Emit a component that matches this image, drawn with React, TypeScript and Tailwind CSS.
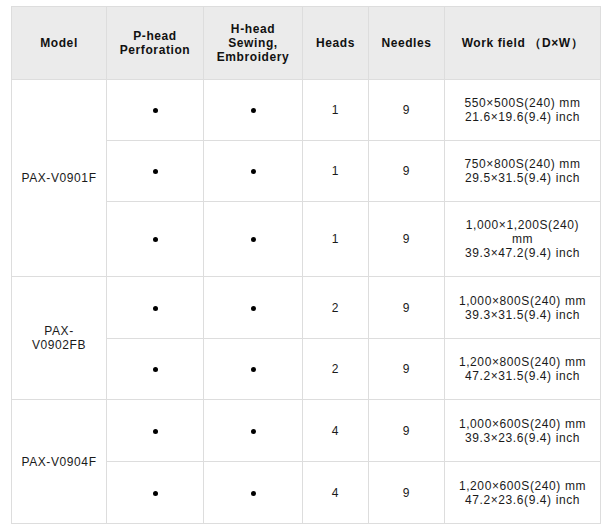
const rows = [
  { model: ["PAX-V0901F"], span: 3, h: "h-[61px]", heads: "1", needles: "9", field: ["550×500S(240) mm", "21.6×19.6(9.4) inch"] },
  { h: "h-[61px]", heads: "1", needles: "9", field: ["750×800S(240) mm", "29.5×31.5(9.4) inch"] },
  { h: "h-[74px]", heads: "1", needles: "9", field: ["1,000×1,200S(240)", "mm", "39.3×47.2(9.4) inch"] },
  { model: ["PAX-", "V0902FB"], span: 2, h: "h-[62px]", heads: "2", needles: "9", field: ["1,000×800S(240) mm", "39.3×31.5(9.4) inch"] },
  { h: "h-[61px]", heads: "2", needles: "9", field: ["1,200×800S(240) mm", "47.2×31.5(9.4) inch"] },
  { model: ["PAX-V0904F"], span: 2, h: "h-[62px]", heads: "4", needles: "9", field: ["1,000×600S(240) mm", "39.3×23.6(9.4) inch"] },
  { h: "h-[62px]", heads: "4", needles: "9", field: ["1,200×600S(240) mm", "47.2×23.6(9.4) inch"] },
] as { model?: string[]; span?: number; h: string; heads: string; needles: string; field: string[] }[];

const cell = "border border-[#dddddd] px-2 py-4 text-center align-middle";
const head = "border border-[#dddddd] px-2 py-[15px] text-center align-middle";

const Lines = ({ lines }: { lines: string[] }) => (
  <>
    {lines.map((l, i) => (
      <div key={i}>{l}</div>
    ))}
  </>
);

const Dot = () => <span className="inline-block h-[5px] w-[5px] rounded-full bg-black align-middle" />;

export default function App() {
  return (
    <div className="min-h-screen bg-white pl-[11px] pt-[6px]" style={{ fontFamily: '"Liberation Sans", Arial, sans-serif' }}>
      <table className="w-[590px] table-fixed border-collapse text-[12px] leading-[14px] tracking-[0.6px] text-[#1a1a1a]">
        <colgroup>
          <col className="w-[95px]" />
          <col className="w-[97px]" />
          <col className="w-[99px]" />
          <col className="w-[66px]" />
          <col className="w-[76px]" />
          <col />
        </colgroup>
        <thead>
          <tr className="bg-[#ebebeb] font-bold text-[#111111]">
            <th className={head}>Model</th>
            <th className={head}>
              <Lines lines={["P-head", "Perforation"]} />
            </th>
            <th className={head}>
              <Lines lines={["H-head", "Sewing,", "Embroidery"]} />
            </th>
            <th className={head}>Heads</th>
            <th className={head}>Needles</th>
            <th className={head}>Work field （D×W）</th>
          </tr>
        </thead>
        <tbody>
          {rows.map((r, i) => (
            <tr key={i} className={r.h}>
              {r.model && (
                <td rowSpan={r.span} className={cell}>
                  <Lines lines={r.model} />
                </td>
              )}
              <td className={cell}>
                <Dot />
              </td>
              <td className={cell}>
                <Dot />
              </td>
              <td className={cell}>{r.heads}</td>
              <td className={cell}>{r.needles}</td>
              <td className={cell}>
                <Lines lines={r.field} />
              </td>
            </tr>
          ))}
        </tbody>
      </table>
    </div>
  );
}
